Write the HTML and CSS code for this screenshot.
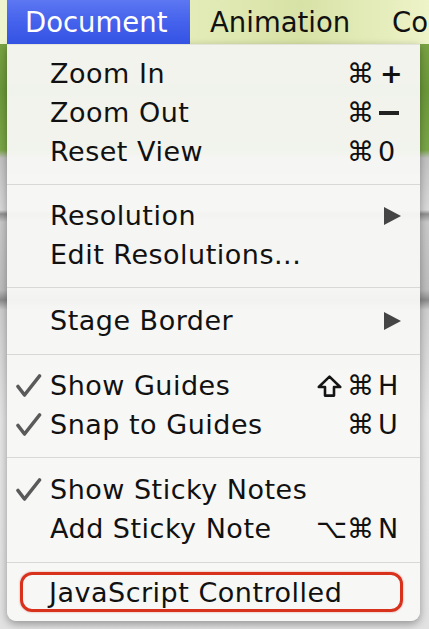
FILE: index.html
```html
<!DOCTYPE html>
<html>
<head>
<meta charset="utf-8">
<link rel="stylesheet" href="styles.css">
</head>
<body>
<div class="screen">
  <div class="menubar">
    <div class="mb-item active">Document</div>
    <div class="mb-item anim">Animation</div>
    <div class="mb-item">Co</div>
  </div>
  <div class="menu">
    <div class="group first">
      <div class="row"><span class="check"></span><span class="label">Zoom In</span><span class="sc"><span class="mods">⌘</span><span class="key plus">+</span></span></div>
      <div class="row"><span class="check"></span><span class="label">Zoom Out</span><span class="sc"><span class="mods">⌘</span><span class="key minus"><span class="bar"></span></span></span></div>
      <div class="row"><span class="check"></span><span class="label">Reset View</span><span class="sc"><span class="mods">⌘</span><span class="key">0</span></span></div>
    </div>
    <div class="sep"></div>
    <div class="group">
      <div class="row"><span class="check"></span><span class="label">Resolution</span><span class="sc"><span class="arrow"><svg width="17" height="18" viewBox="0 0 17 18"><polygon points="0,0 17,9 0,18" fill="#454545"/></svg></span></span></div>
      <div class="row"><span class="check"></span><span class="label">Edit Resolutions...</span></div>
    </div>
    <div class="sep"></div>
    <div class="group single">
      <div class="row"><span class="check"></span><span class="label">Stage Border</span><span class="sc"><span class="arrow"><svg width="17" height="18" viewBox="0 0 17 18"><polygon points="0,0 17,9 0,18" fill="#454545"/></svg></span></span></div>
    </div>
    <div class="sep"></div>
    <div class="group">
      <div class="row"><span class="check"><svg width="26" height="24" viewBox="0 0 26 24"><path d="M2 12.5 L8.5 21 L23.5 2" fill="none" stroke="#5a5a5a" stroke-width="3.6" stroke-linecap="round" stroke-linejoin="round"/></svg></span><span class="label">Show Guides</span><span class="sc"><span class="shift"><svg width="25" height="22" viewBox="0 0 25 22"><polygon points="12.5,1.6 23.2,12 17,12 17,20.6 8,20.6 8,12 1.8,12" fill="none" stroke="#151515" stroke-width="2.6" stroke-linejoin="round"/></svg></span><span class="mods">⌘</span><span class="key">H</span></span></div>
      <div class="row"><span class="check"><svg width="26" height="24" viewBox="0 0 26 24"><path d="M2 12.5 L8.5 21 L23.5 2" fill="none" stroke="#5a5a5a" stroke-width="3.6" stroke-linecap="round" stroke-linejoin="round"/></svg></span><span class="label">Snap to Guides</span><span class="sc"><span class="mods">⌘</span><span class="key">U</span></span></div>
    </div>
    <div class="sep"></div>
    <div class="group notes">
      <div class="row"><span class="check"><svg width="26" height="24" viewBox="0 0 26 24"><path d="M2 12.5 L8.5 21 L23.5 2" fill="none" stroke="#5a5a5a" stroke-width="3.6" stroke-linecap="round" stroke-linejoin="round"/></svg></span><span class="label">Show Sticky Notes</span></div>
      <div class="row"><span class="check"></span><span class="label">Add Sticky Note</span><span class="sc"><span class="mods">⌥⌘</span><span class="key">N</span></span></div>
    </div>
    <div class="sep"></div>
    <div class="group last">
      <div class="row marked"><span class="label">JavaScript Controlled</span></div>
    </div>
  </div>
</div>
</body>
</html>
```
FILE: styles.css
```css
html, body {
  margin: 0;
  padding: 0;
  background: #dcdcdc;
}

.screen {
  width: 429px;
  height: 629px;
  overflow: hidden;
  font-family: "DejaVu Sans", "Liberation Sans", sans-serif;
  color: #111;
  background:
    linear-gradient(to bottom,
      #86ad4d 0px, #6c983a 90px, #7aa647 150px,
      #c2c2c2 158px, #d9d9d9 210px, #8f8f8f 214px, #c9c9c9 222px,
      #bdbdbd 290px, #8c8c8c 300px, #cfcfcf 310px,
      #e6e6e6 420px, #e2e2e2 629px);
}

.menubar {
  height: 44px;
  display: flex;
  align-items: center;
  padding-left: 7px;
  font-size: 27.5px;
  background: linear-gradient(to right, #eef4cf 0%, #e3ecb8 45%, #d7e2a6 70%, #eef3c8 100%);
}

.mb-item {
  height: 44px;
  line-height: 44px;
  white-space: nowrap;
}

.mb-item.active {
  width: 183px;
  box-sizing: border-box;
  padding-left: 18px;
  color: #fff;
  background: linear-gradient(to bottom, #5d77f2 0%, #4462ec 50%, #3553e3 100%);
}

.mb-item.anim {
  margin-left: 20px;
  width: 182px;
}

.menu {
  margin-left: 7px;
  width: 413px;
  border-top: 1px solid #e2e4dc;
  background: rgba(248, 248, 246, 0.95);
  border-radius: 0 0 9px 9px;
  box-shadow: 0 3px 8px rgba(0, 0, 0, 0.35);
  font-size: 27px;
  letter-spacing: 0.5px;
}

.group {
  padding: 11px 0 13px;
}

.group.first {
  padding-top: 9px;
}

.group.single {
  padding: 13px 0 14px;
}

.group.notes {
  padding: 12px 0 14px;
}

.group.last {
  padding: 9px 0 9px;
}

.sep {
  height: 1px;
  background: #d8d8d6;
}

.row {
  height: 39px;
  display: flex;
  align-items: center;
  white-space: nowrap;
}

.check {
  width: 43px;
  flex: none;
  display: flex;
  justify-content: flex-end;
  padding-right: 8px;
  box-sizing: border-box;
}

.check svg {
  display: block;
}

.label {
  flex: 1;
}

.sc {
  display: flex;
  align-items: center;
  padding-right: 20px;
  letter-spacing: 0;
}

.shift {
  display: block;
  margin-right: 5px;
}

.shift svg {
  display: block;
}

.mods {
  text-align: right;
}

.key {
  width: 22px;
  margin-left: 4px;
}

.key.plus {
  font-weight: bold;
  margin-left: 6px;
  width: 20px;
}

.key.minus {
  display: flex;
  align-items: center;
  height: 39px;
  margin-left: 5px;
  width: 21px;
}

.bar {
  display: block;
  width: 20px;
  height: 4px;
  background: #222;
}

.arrow {
  display: block;
  margin-right: -1px;
}

.arrow svg {
  display: block;
}

.row.marked {
  height: 40px;
  box-sizing: border-box;
  margin: 0 17px 0 13px;
  padding-left: 26px;
  border: 3.5px solid #d8311c;
  border-radius: 12px;
  box-shadow: 0 0 2px rgba(200, 40, 20, 0.5);
}
```
